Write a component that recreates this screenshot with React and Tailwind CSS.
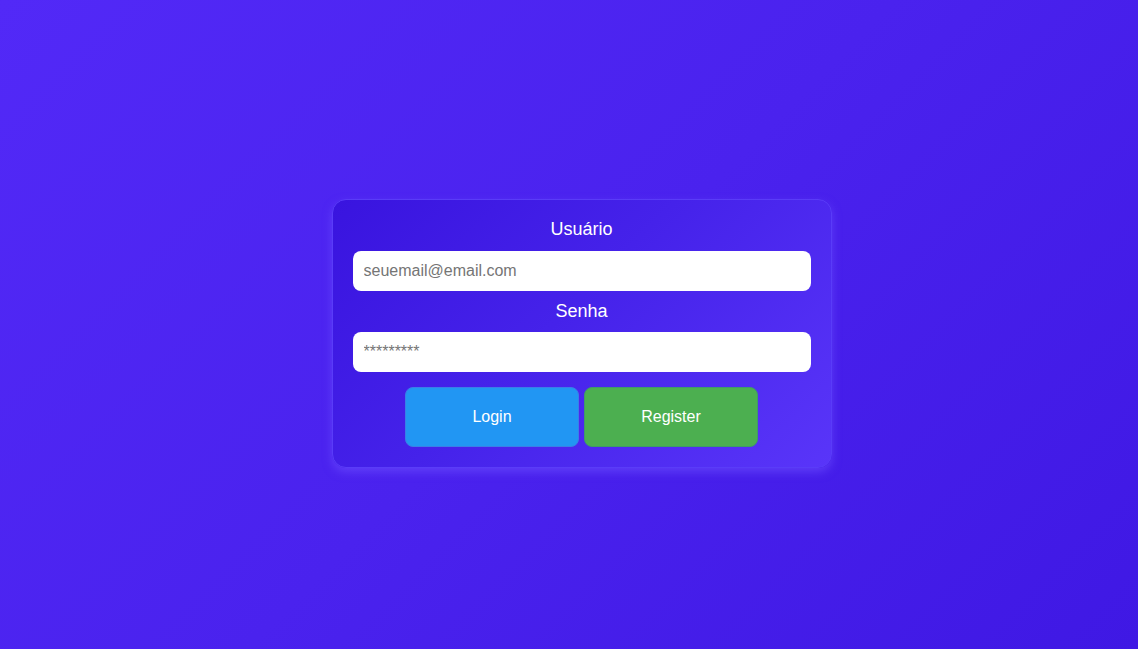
export default function App() {
  return (
    <div
      className="w-full h-[649px] flex items-center justify-center pl-[25px] pt-[18px] bg-[linear-gradient(135deg,#5229f7_0%,#4a22ee_50%,#3f18e4_100%)]"
      style={{ fontFamily: '"Liberation Sans", Arial, sans-serif' }}
    >
      <div className="w-[500px] flex flex-col items-center px-5 pt-[19px] pb-5 rounded-[14px] border border-[#5a3cf8] bg-[linear-gradient(135deg,#3914df_0%,#4522ea_45%,#5935f9_100%)] shadow-[0_4px_10px_rgba(110,80,255,0.6)]">
        <label className="text-white text-[18px] leading-[21px] mb-[11px]">Usuário</label>
        <input
          type="text"
          placeholder="seuemail@email.com"
          className="w-full h-10 rounded-lg bg-white px-[11px] text-[16px] text-black placeholder:text-[#757575] outline-none"
        />
        <label className="text-white text-[18px] leading-[21px] mt-[10px] mb-[10px]">Senha</label>
        <input
          type="password"
          placeholder="*********"
          className="w-full h-10 rounded-lg bg-white px-[11px] text-[16px] text-black placeholder:text-[#757575] outline-none"
        />
        <div className="flex gap-[5px] mt-[15px]">
          <button className="w-[174px] h-[60px] rounded-lg bg-[#2196f3] border border-[#3b7de8] text-white text-[16px]">
            Login
          </button>
          <button className="w-[174px] h-[60px] rounded-lg bg-[#4caf50] border border-[#3f9a6a] text-white text-[16px]">
            Register
          </button>
        </div>
      </div>
    </div>
  );
}
